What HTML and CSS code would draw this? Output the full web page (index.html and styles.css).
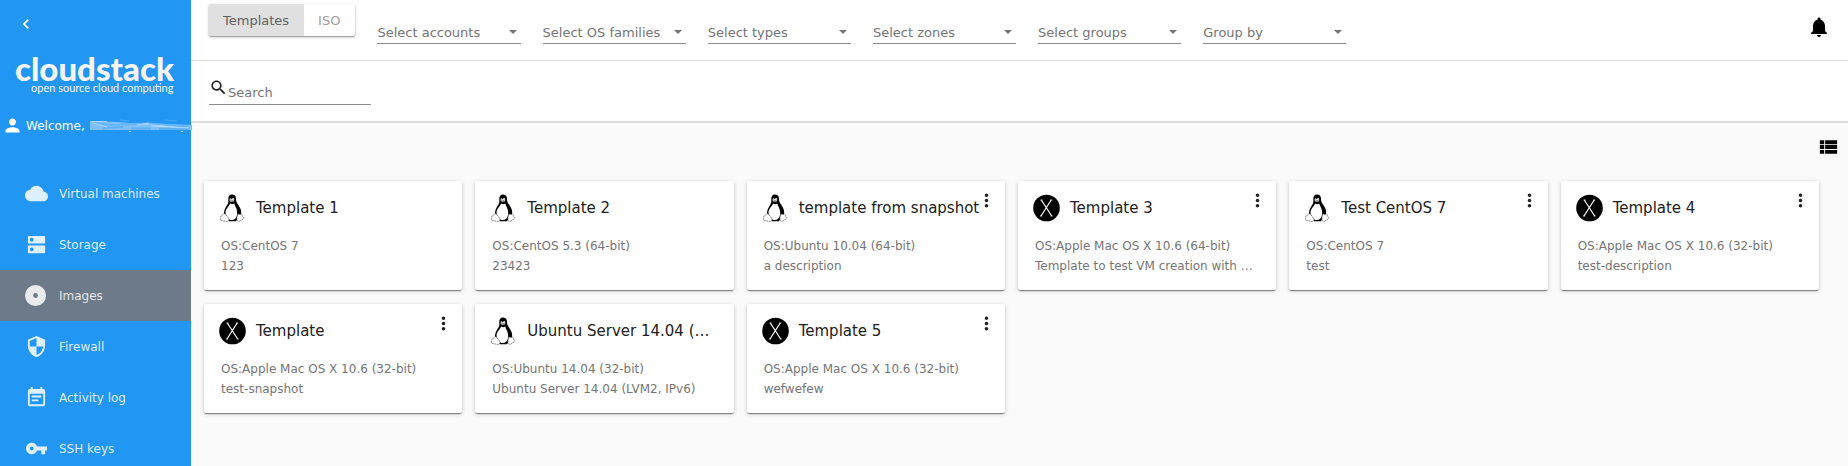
FILE: index.html
```html
<!DOCTYPE html>
<html lang="en">
<head>
<meta charset="utf-8">
<title>CloudStack – Images</title>
<link rel="stylesheet" href="styles.css">
</head>
<body>
<svg class="sprite" aria-hidden="true">
  <symbol id="dots" viewBox="0 0 24 24"><path d="M12 8c1.100 0 2-.9 2-2s-.9-2-2-2-2 .9-2 2 .9 2 2 2zm0 2c-1.100 0-2 .9-2 2s.9 2 2 2 2-.9 2-2-.9-2-2-2zm0 6c-1.100 0-2 .9-2 2s.9 2 2 2 2-.9 2-2-.9-2-2-2z"/></symbol>
  <symbol id="osx" viewBox="0 0 27 27"><circle cx="13.500" cy="13.500" r="13.300"/><path d="M8.300 5.500L18.700 21.500M18.200 5.500L8 21.500" fill="none" stroke="#fff" stroke-width="1.200"/><path d="M7.500 5.500h2M17.300 5.500h2M7 21.500h2M17.700 21.500h2" stroke="#fff" stroke-width=".8"/></symbol>
  <symbol id="tux" viewBox="0 0 27 28">
    <path d="M13 .4c-2.700 0-3.800 2-3.700 4.600.1 2.500.2 3.700-.9 5.500C6.900 13 5.300 15.300 5 18.500c-.1 1.700.5 3.500 2.200 5.500l2.600 3.200h7l3.600-4.200c1.800-2 2.100-4.500 1.400-7.200-.7-2.700-2.400-4.600-3.800-6.800-1.200-2-.8-3.600-1.100-5.300C16.600 1.500 15.100.4 13 .4z"/>
    <path d="M11.200 9.600c1.200 1 2.800.8 4-.1.500 1.600 1.400 3.300 2.100 5.100.9 2.300 1.200 4.900.5 7.400-.4 1.800-1.600 3.200-3.600 3.800-2.200.6-3.700.1-4.900-1.300-1.300-1.700-2.700-3.500-2.800-5.900 0-3.500 3.500-6.200 4.700-9z" fill="#fff"/>
    <path d="M10.700 4.900c.2-1 1.300-1 1.600 0 .2.600.5.600.8 0 .4-1.200 1.900-1.100 2.100 0 .1.900-.1 1.500-.3 2-.7 1.200-3 1.900-4 .2-.3-.7-.4-1.400-.2-2.200z" fill="#fff"/>
    <path d="M11.400 5.400h.7M13.800 5.400h.8M11.300 7l1.300-.6 1.900.5-1.600.9z" stroke="#222" stroke-width=".5" fill="#ddd"/>
    <path d="M4.800 19.800c1.700-.5 2.300 1.200 3.500 2.700 1.500 1.800 2.600 3.200 1 4.400-1.300 1-2.800.4-4.500 0-1.500-.4-3-.3-3.300-1.100-.3-.7.400-1.600.1-2.700-.2-1.200 1.200-1.100 1.800-1.500.6-.5.600-1.600 1.400-1.800z" fill="#fff" stroke="#555" stroke-width=".7" stroke-dasharray="2 .6"/>
    <path d="M18.500 20.700c.6-1.200 1.300-.3 2.300-.2 1.300.1 1.500-.8 2.100-.3.700.6.300 1.900 1 2.600.5.600 1.200.8 1.100 1.400-.2.900-1.900 1.100-3 2-1 .8-1.900 1.500-2.900 1.100-1.300-.5-1.300-1.900-1.100-3.400.1-1.100.1-2.200.5-3.200z" fill="#fff" stroke="#555" stroke-width=".7" stroke-dasharray="2 .6"/>
  </symbol>
</svg>
<div class="app">
  <nav class="sidebar">
    <button class="back" aria-label="Collapse menu"><svg viewBox="0 0 24 24"><path d="M15.410 7.410L14 6l-6 6 6 6 1.410-1.410L10.830 12z"/></svg></button>
    <div class="logo"><span class="brand">cloudstack</span><span class="tagline">open source cloud computing</span></div>
    <div class="user">
      <svg class="person" viewBox="0 0 24 24"><path d="M12 12c2.210 0 4-1.790 4-4s-1.790-4-4-4-4 1.790-4 4 1.790 4 4 4zm0 2c-2.670 0-8 1.340-8 4v2h16v-2c0-2.660-5.330-4-8-4z"/></svg>
      <span>Welcome,</span>
      <svg class="scribble" viewBox="0 0 104 14" fill="none" aria-hidden="true">
        <path d="M1 2l28 1 22 2h30l22 1v5H1z" fill="#7dc0f9"/>
        <path d="M6 4c24 4 42-1 62 1 14 1 20 2 31 2" stroke="#64b4f8" stroke-width="2"/>
        <path d="M42 9.500h20M70 10h30M14 9l20-1" stroke="#5fb1f7" stroke-width="2"/>
        <path d="M2 2.500h16M4 4l14 4M62 7c14-1 24 2 38 2M48 6l12-2" stroke="#a9d5fb"/>
        <path d="M31 1l9 1M76 1l12 1" stroke="#4caaf6"/>
        <path d="M40 12.500h2M92 12.500h2" stroke="#d5eafd"/>
      </svg>
    </div>
    <div class="menu">
      <a href="#"><svg viewBox="0 0 24 24"><path d="M19.350 10.040C18.670 6.590 15.640 4 12 4 9.110 4 6.600 5.640 5.350 8.040 2.340 8.360 0 10.910 0 14c0 3.310 2.690 6 6 6h13c2.760 0 5-2.240 5-5 0-2.640-2.050-4.780-4.650-4.960z"/></svg>Virtual machines</a>
      <a href="#"><svg viewBox="0 0 24 24"><path d="M20 13H4c-.55 0-1 .45-1 1v6c0 .55.45 1 1 1h16c.55 0 1-.45 1-1v-6c0-.55-.45-1-1-1zM7 19c-1.100 0-2-.9-2-2s.9-2 2-2 2 .9 2 2-.9 2-2 2zM20 3H4c-.55 0-1 .45-1 1v6c0 .55.45 1 1 1h16c.55 0 1-.45 1-1V4c0-.55-.45-1-1-1zM7 9c-1.100 0-2-.9-2-2s.9-2 2-2 2 .9 2 2-.9 2-2 2z"/></svg>Storage</a>
      <a href="#" class="active" aria-current="page"><svg viewBox="0 0 24 24"><path fill-rule="evenodd" d="M11 1a11 11 0 1 0 0 22 11 11 0 0 0 0-22zm0 8.500a2.500 2.500 0 1 1 0 5 2.500 2.500 0 0 1 0-5z"/></svg>Images</a>
      <a href="#"><svg viewBox="0 0 24 24"><path d="M12 1L3 5v6c0 5.550 3.840 10.740 9 12 5.160-1.260 9-6.450 9-12V5l-9-4zm0 10.990h7c-.53 4.120-3.280 7.790-7 8.940V12H5V6.300l7-3.110v8.800z"/></svg>Firewall</a>
      <a href="#"><svg viewBox="0 0 24 24"><path d="M17 10H7v2h10v-2zm2-7h-1V1h-2v2H8V1H6v2H5c-1.110 0-1.990.9-1.990 2L3 19c0 1.100.89 2 2 2h14c1.100 0 2-.9 2-2V5c0-1.100-.9-2-2-2zm0 16H5V8h14v11zm-5-5H7v2h7v-2z"/></svg>Activity log</a>
      <a href="#"><svg viewBox="0 0 24 24"><path d="M12.650 10C11.830 7.670 9.610 6 7 6c-3.310 0-6 2.690-6 6s2.690 6 6 6c2.610 0 4.830-1.670 5.650-4H17v4h4v-4h2v-4H12.650zM7 14c-1.100 0-2-.9-2-2s.9-2 2-2 2 .9 2 2-.9 2-2 2z"/></svg>SSH keys</a>
    </div>
  </nav>
  <main class="main">
    <header class="toolbar">
      <div class="toggle" role="group" aria-label="Image kind"><button class="selected" aria-pressed="true">Templates</button><button aria-pressed="false">ISO</button></div>
      <div class="filters">
        <div class="field"><select aria-label="Accounts"><option>Select accounts</option></select></div>
        <div class="field"><select aria-label="OS families"><option>Select OS families</option></select></div>
        <div class="field"><select aria-label="Types"><option>Select types</option></select></div>
        <div class="field"><select aria-label="Zones"><option>Select zones</option></select></div>
        <div class="field"><select aria-label="Groups"><option>Select groups</option></select></div>
        <div class="field"><select aria-label="Grouping"><option>Group by</option></select></div>
      </div>
      <button class="bell" aria-label="Notifications"><svg viewBox="0 0 24 24"><path d="M12 22c1.100 0 2-.9 2-2h-4c0 1.100.89 2 2 2zm6-6v-5c0-3.070-1.640-5.640-4.500-6.320V4c0-.83-.67-1.500-1.500-1.500s-1.500.67-1.500 1.500v.68C7.630 5.360 6 7.920 6 11v5l-2 2v1h16v-1l-2-2z"/></svg></button>
    </header>
    <div class="searchbar">
      <label class="search"><svg viewBox="0 0 24 24"><path d="M15.500 14h-.79l-.28-.27C15.410 12.590 16 11.110 16 9.500 16 5.910 13.090 3 9.500 3S3 5.910 3 9.500 5.910 16 9.500 16c1.610 0 3.090-.59 4.230-1.570l.27.28v.79l5 4.990L20.490 19l-4.990-5zm-6 0C7.010 14 5 11.990 5 9.500S7.010 5 9.500 5 14 7.010 14 9.500 11.990 14 9.500 14z"/></svg><input type="search" placeholder="Search" aria-label="Search"></label>
    </div>
    <div class="viewbar"><button aria-label="List view"><svg viewBox="0 0 24 24"><path d="M3 14h4.500v-4H3v4zm0 5h4.500v-4H3v4zM3 9h4.500V5H3v4zm5.500 5H21v-4H8.500v4zm0 5H21v-4H8.500v4zM8.500 5v4H21V5H8.500z"/></svg></button></div>
    <section class="grid">
      <article class="card"><h2><svg><use href="#tux"/></svg><span>Template 1</span></h2><p>OS:CentOS 7</p><p>123</p></article>
      <article class="card"><h2><svg><use href="#tux"/></svg><span>Template 2</span></h2><p>OS:CentOS 5.3 (64-bit)</p><p>23423</p></article>
      <article class="card"><h2><svg><use href="#tux"/></svg><span>template from snapshot</span></h2><p>OS:Ubuntu 10.04 (64-bit)</p><p>a description</p><button class="more" aria-label="Actions"><svg><use href="#dots"/></svg></button></article>
      <article class="card"><h2><svg><use href="#osx"/></svg><span>Template 3</span></h2><p>OS:Apple Mac OS X 10.6 (64-bit)</p><p>Template to test VM creation with …</p><button class="more" aria-label="Actions"><svg><use href="#dots"/></svg></button></article>
      <article class="card"><h2><svg><use href="#tux"/></svg><span>Test CentOS 7</span></h2><p>OS:CentOS 7</p><p>test</p><button class="more" aria-label="Actions"><svg><use href="#dots"/></svg></button></article>
      <article class="card"><h2><svg><use href="#osx"/></svg><span>Template 4</span></h2><p>OS:Apple Mac OS X 10.6 (32-bit)</p><p>test-description</p><button class="more" aria-label="Actions"><svg><use href="#dots"/></svg></button></article>
      <article class="card"><h2><svg><use href="#osx"/></svg><span>Template</span></h2><p>OS:Apple Mac OS X 10.6 (32-bit)</p><p>test-snapshot</p><button class="more" aria-label="Actions"><svg><use href="#dots"/></svg></button></article>
      <article class="card"><h2><svg><use href="#tux"/></svg><span>Ubuntu Server 14.04 (…</span></h2><p>OS:Ubuntu 14.04 (32-bit)</p><p>Ubuntu Server 14.04 (LVM2, IPv6)</p></article>
      <article class="card"><h2><svg><use href="#osx"/></svg><span>Template 5</span></h2><p>OS:Apple Mac OS X 10.6 (32-bit)</p><p>wefwefew</p><button class="more" aria-label="Actions"><svg><use href="#dots"/></svg></button></article>
    </section>
  </main>
</div>
</body>
</html>
```
FILE: styles.css
```css
* { box-sizing: border-box; }
html, body { height: 100%; }
body {
  margin: 0;
  overflow: hidden;
  background: #fafafa;
  color: #212121;
  font-family: "DejaVu Sans", sans-serif;
  font-size: 12px;
}
button, input, select { font: inherit; color: inherit; border: 0; border-radius: 0; background: none; padding: 0; margin: 0; outline: 0; }
svg { display: block; fill: currentColor; flex: none; }
.sprite { display: none; }
.app { display: flex; height: 100%; }

.sidebar { flex: none; width: 191px; background: #2196f3; color: #fff; display: flex; flex-direction: column; }
.back { align-self: flex-start; margin: 14px 0 0 16px; }
.back svg { width: 20px; height: 20px; }
.logo { display: flex; flex-direction: column; margin-top: 16px; padding-left: 15px; white-space: nowrap; color: #f5f5f5; }
.brand { font: 900 33px/36px Lato, sans-serif; }
.tagline { font: 11px/12px Lato, sans-serif; padding-left: 16px; margin-top: -4px; }
.user { display: flex; align-items: center; height: 24px; margin-top: 21px; padding-left: 2px; gap: 3px; }
.person { width: 21px; height: 21px; }
.scribble { width: 104px; height: 14px; margin-left: 1px; position: relative; z-index: 1; }
.menu { display: flex; flex-direction: column; margin-top: 32px; }
.menu a { display: flex; align-items: center; gap: 11px; height: 51px; flex: none; padding-left: 25px; color: rgba(255, 255, 255, .85); text-decoration: none; }
.menu svg { width: 23px; height: 23px; }
.menu .active { background: #6c7a89; }

.main { flex: 1; min-width: 0; }
.toolbar { display: flex; align-items: flex-start; height: 61px; padding: 4px 17px 0 18px; background: #fff; border-bottom: 1px solid #ddd; font-size: 13px; }
.toggle { display: flex; flex: none; border-radius: 2px; overflow: hidden; background: #fff; box-shadow: 0 1px 3px rgba(0, 0, 0, .3), 0 1px 1px rgba(0, 0, 0, .2); }
.toggle button { height: 32px; padding: 0 15px 0 14px; color: #9e9e9e; }
.toggle .selected { background: #e0e0e0; color: #616161; }
.filters { display: flex; flex: 0 1 969px; gap: 22px; margin: 16px auto 0 22px; }
.field { flex: 1; min-width: 0; position: relative; border-bottom: 1px solid #8c8c8c; }
.field::after { content: ""; position: absolute; right: 4px; top: 10px; border: 4px solid transparent; border-top-color: #757575; border-bottom: 0; pointer-events: none; }
.field select { appearance: none; width: 100%; height: 23px; padding-top: 2px; color: #757575; }
.bell { margin: 11px 0 0; }
.bell svg { width: 24px; height: 24px; color: #000; }
.searchbar { height: 62px; padding: 15px 18px 0; background: #fff; border-bottom: 2px solid #ddd; font-size: 13px; }
.search { display: flex; width: 162px; height: 29px; border-bottom: 1px solid #8c8c8c; }
.search svg { width: 19px; height: 19px; margin-top: 2px; color: #212121; }
.search input { flex: 1; min-width: 0; padding-top: 5px; appearance: none; }
.search input::placeholder { color: #757575; opacity: 1; }
.viewbar { display: flex; justify-content: flex-end; padding: 12px 8px 0; height: 58px; color: #000; }
.viewbar button { height: 24px; }
.viewbar svg { width: 23px; height: 24px; }

.grid { display: grid; grid-template-columns: repeat(6, minmax(0, 1fr)); gap: 14px 13px; padding: 0 29px 0 13px; }
.card { position: relative; height: 109px; padding: 12px 17px; background: #fff; border-radius: 2px; box-shadow: 0 2px 1px -1px rgba(0, 0, 0, .3), 0 1px 1px rgba(0, 0, 0, .2), 0 1px 4px rgba(0, 0, 0, .2); }
.card h2 { display: flex; align-items: center; gap: 10px; margin: 0 0 13px -2px; height: 30px; font-size: 15px; font-weight: 400; white-space: nowrap; }
.card h2 svg { width: 27px; height: 28px; color: #000; }
.card p { margin: 0; line-height: 20px; color: #757575; white-space: nowrap; overflow: hidden; }
.more { position: absolute; top: 9px; right: 8px; }
.more svg { width: 21px; height: 21px; color: #212121; }
```
